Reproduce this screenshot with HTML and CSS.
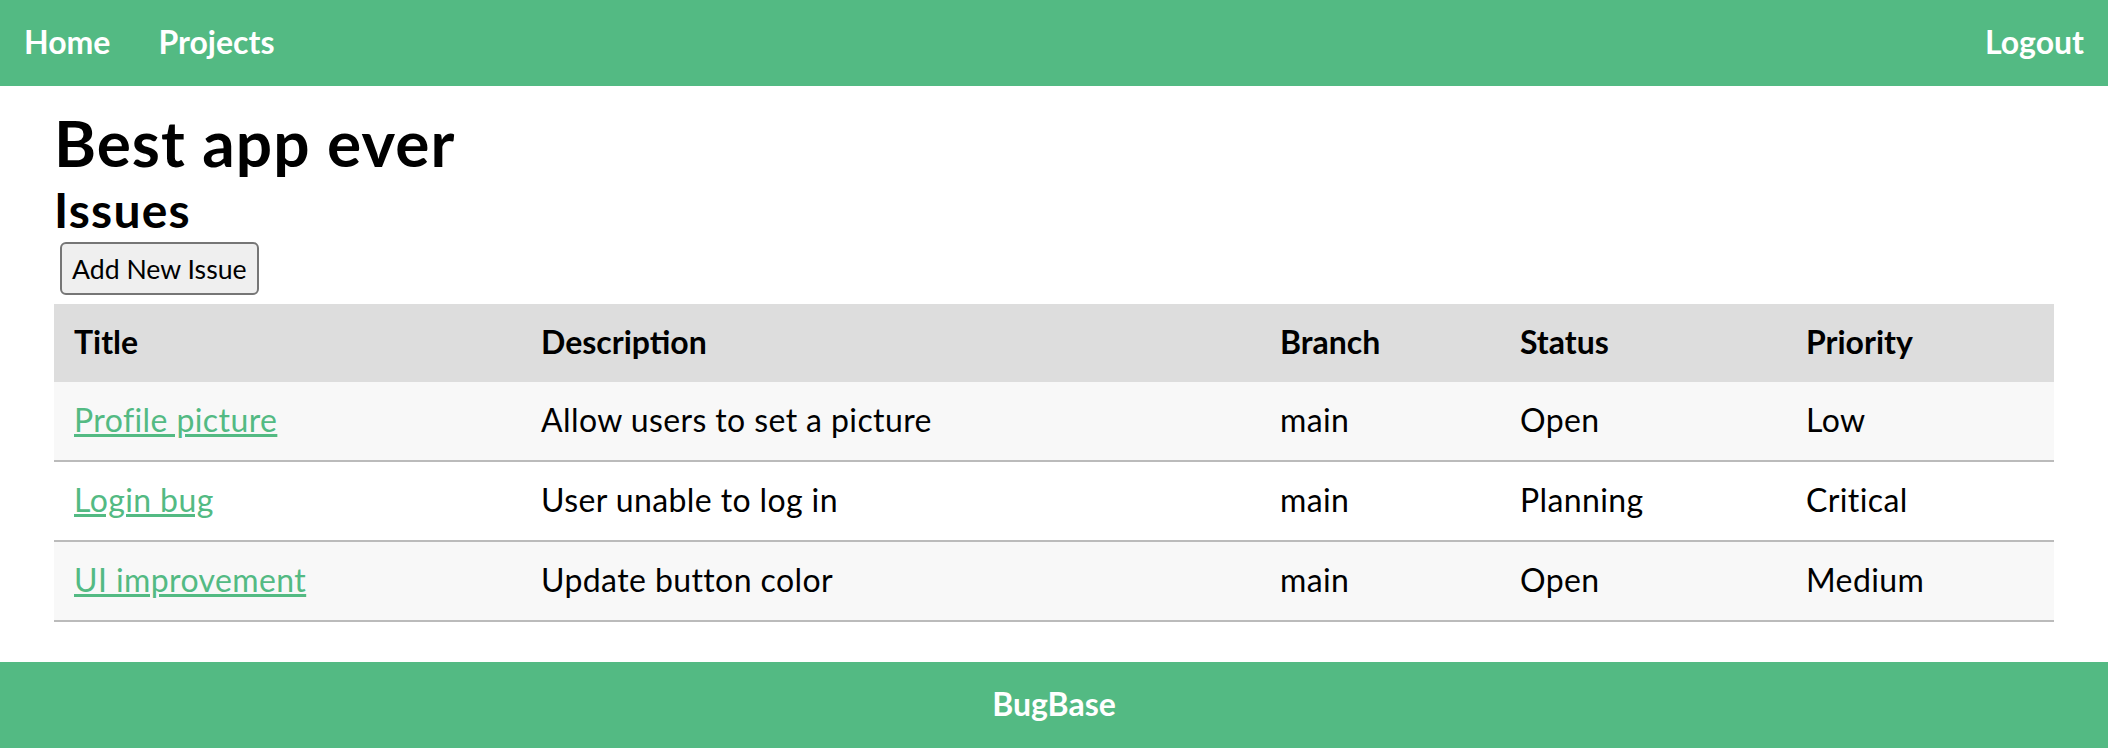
FILE: index.html
```html
<!DOCTYPE html>
<html lang="en">
<head>
<meta charset="utf-8">
<title>BugBase</title>
<link rel="stylesheet" href="styles.css">
</head>
<body>
<nav class="topnav">
  <div class="nav-left">
    <a class="nav-link" href="#">Home</a>
    <a class="nav-link" href="#">Projects</a>
  </div>
  <a class="nav-link" href="#">Logout</a>
</nav>
<main class="content">
  <h1 class="project-title">Best app ever</h1>
  <h2 class="section-title">Issues</h2>
  <div class="actions"><button class="btn" type="button">Add New Issue</button></div>
  <table class="issues">
    <colgroup>
      <col class="c-title">
      <col class="c-desc">
      <col class="c-branch">
      <col class="c-status">
      <col class="c-priority">
    </colgroup>
    <thead>
      <tr><th>Title</th><th>Description</th><th>Branch</th><th>Status</th><th>Priority</th></tr>
    </thead>
    <tbody>
      <tr><td><a href="#">Profile picture</a></td><td>Allow users to set a picture</td><td>main</td><td>Open</td><td>Low</td></tr>
      <tr><td><a href="#">Login bug</a></td><td>User unable to log in</td><td>main</td><td>Planning</td><td>Critical</td></tr>
      <tr><td><a href="#">UI improvement</a></td><td>Update button color</td><td>main</td><td>Open</td><td>Medium</td></tr>
    </tbody>
  </table>
</main>
<footer class="footer">BugBase</footer>
</body>
</html>
```
FILE: styles.css
```css
html, body {
  margin: 0;
  padding: 0;
}
body {
  font-family: "Lato", "Open Sans", sans-serif;
  font-size: 32px;
  color: #000;
  background: #fff;
}
.topnav {
  display: flex;
  justify-content: space-between;
  align-items: center;
  background: #53ba83;
  height: 86px;
}
.nav-left {
  display: flex;
}
.nav-link {
  display: block;
  color: #fff;
  font-weight: 700;
  text-decoration: none;
  line-height: 38px;
  padding: 23px 24px 25px;
}
.content {
  padding: 0 54px;
}
.project-title {
  font-size: 64px;
  line-height: 76px;
  font-weight: 700;
  letter-spacing: 1px;
  margin: 19px 0 0;
}
.section-title {
  font-size: 48px;
  line-height: 58px;
  font-weight: 700;
  letter-spacing: 1.2px;
  margin: 0;
}
.actions {
  padding: 3px 0 9px 6px;
  height: 53px;
}
.btn {
  font-family: inherit;
  font-size: 26.67px;
  height: 53px;
  padding: 0 10px;
  background: #efefef;
  border: 2px solid #767676;
  border-radius: 6px;
  color: #000;
}
.issues {
  width: 100%;
  border-collapse: collapse;
  table-layout: fixed;
  margin-bottom: 40px;
}
.c-title { width: 467px; }
.c-desc { width: 739px; }
.c-branch { width: 240px; }
.c-status { width: 286px; }
.c-priority { width: 268px; }
.issues th,
.issues td {
  text-align: left;
  padding: 19px 20px 21px;
  line-height: 38px;
}
.issues td {
  letter-spacing: 0.4px;
}
.issues thead th {
  background: #dddddd;
  font-weight: 700;
}
.issues tbody tr {
  border-bottom: 2px solid #bbbbbb;
}
.issues tbody tr:nth-child(odd) {
  background: #f8f8f8;
}
.issues a {
  color: #53ba83;
  text-decoration: underline;
}
.footer {
  background: #53ba83;
  color: #fff;
  font-weight: 700;
  text-align: center;
  line-height: 38px;
  padding: 23px 0 25px;
}
```
